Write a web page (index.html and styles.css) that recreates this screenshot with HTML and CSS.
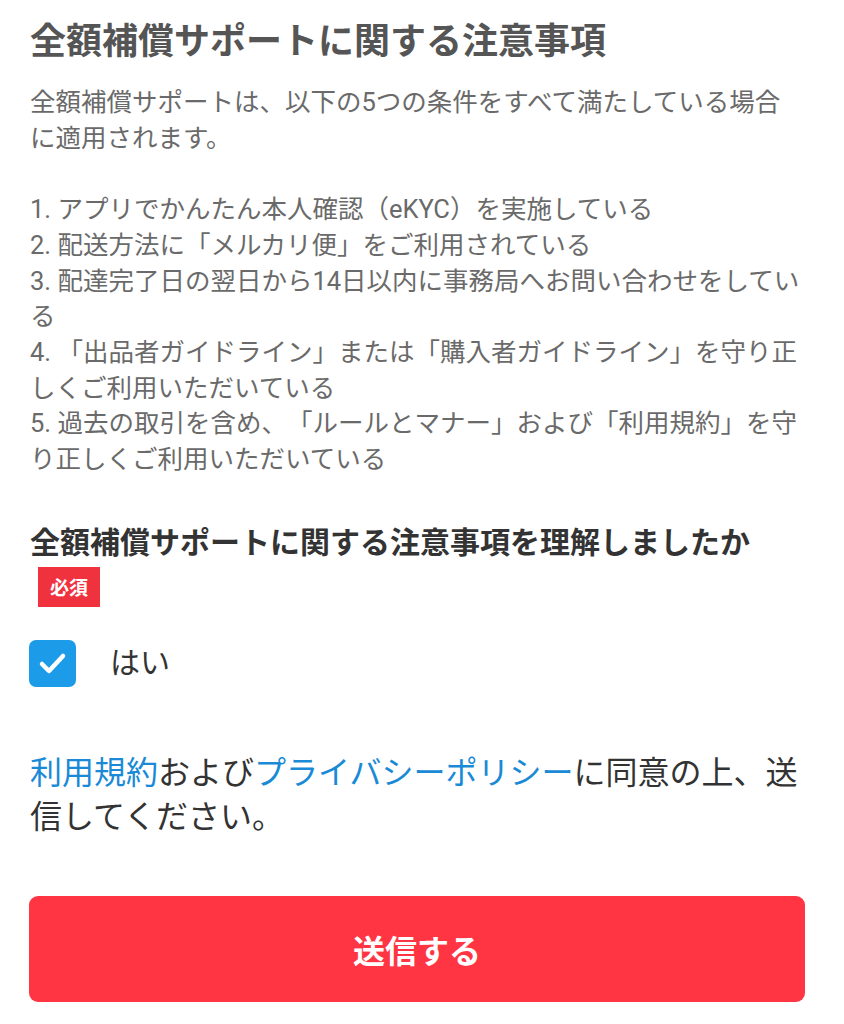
FILE: index.html
```html
<!DOCTYPE html>
<html lang="ja">
<head>
<meta charset="utf-8">
<link rel="stylesheet" href="styles.css">
</head>
<body>
<main class="page">
  <h1 class="title">全額補償サポートに関する注意事項</h1>
  <p class="notes">全額補償サポートは、以下の5つの条件をすべて満たしている場合に適用されます。<br><br>1. アプリでかんたん本人確認（eKYC）を実施している<br>2. 配送方法に「メルカリ便」をご利用されている<br>3. 配達完了日の翌日から14日以内に事務局へお問い合わせをしている<br>4. 「出品者ガイドライン」または「購入者ガイドライン」を守り正しくご利用いただいている<br>5. 過去の取引を含め、「ルールとマナー」および「利用規約」を守り正しくご利用いただいている</p>

  <section class="question">
    <h2 class="q-title">全額補償サポートに関する注意事項を理解しましたか</h2>
    <span class="badge">必須</span>
    <label class="check-row">
      <span class="checkbox">
        <svg viewBox="0 0 47 47" width="47" height="47"><polyline points="13,24 20,31 34,16" fill="none" stroke="#fff" stroke-width="4.5" stroke-linecap="round" stroke-linejoin="round"/></svg>
      </span>
      <span class="check-label">はい</span>
    </label>
  </section>

  <p class="terms"><a class="link">利用規約</a>および<a class="link">プライバシーポリシー</a>に同意の上、送信してください。</p>

  <button class="submit">送信する</button>
</main>
</body>
</html>
```

FILE: styles.css
```css
* { box-sizing: border-box; }
html, body { margin: 0; padding: 0; background: #fff; }
body {
  font-family: Roboto, "Noto Sans CJK JP", "Noto Sans", sans-serif;
  text-spacing-trim: space-all;
}
.page {
  width: 844px;
  padding: 17px 39px 0 29px;
  display: flex;
  flex-direction: column;
  align-items: flex-start;
}
.title {
  margin: 0;
  font-size: 36px;
  line-height: 50px;
  font-weight: 700;
  color: #555;
  padding-left: 1px;
}
.notes {
  margin: 18px 0 0;
  font-size: 25.5px;
  line-height: 35.7px;
  color: #6a6a6a;
  padding-left: 1px;
}
.question {
  margin-top: 44px;
  display: flex;
  flex-direction: column;
  align-items: flex-start;
}
.q-title {
  margin: 0;
  font-size: 30px;
  line-height: 42px;
  font-weight: 700;
  color: #333;
  padding-left: 1px;
}
.badge {
  margin: 3px 0 0 9px;
  width: 62px;
  height: 40px;
  background: #f0323f;
  color: #fff;
  font-size: 19px;
  font-weight: 700;
  display: flex;
  align-items: center;
  justify-content: center;
}
.check-row {
  margin-top: 33px;
  display: flex;
  align-items: center;
  gap: 34px;
}
.checkbox {
  width: 47px;
  height: 47px;
  border-radius: 7px;
  background: #1b9be8;
  display: flex;
}
.check-label {
  font-size: 30px;
  color: #333;
  line-height: 42px;
}
.terms {
  margin: 64px 0 0;
  font-size: 32px;
  line-height: 44px;
  color: #333;
  padding-left: 1px;
}
.link { color: #1a8ad6; text-decoration: none; }
.submit {
  margin-top: 57px;
  width: 776px;
  height: 106px;
  border: 0;
  border-radius: 9px;
  background: #ff3543;
  color: #fff;
  font-family: inherit;
  font-size: 32px;
  font-weight: 700;
  padding: 0;
}
```
